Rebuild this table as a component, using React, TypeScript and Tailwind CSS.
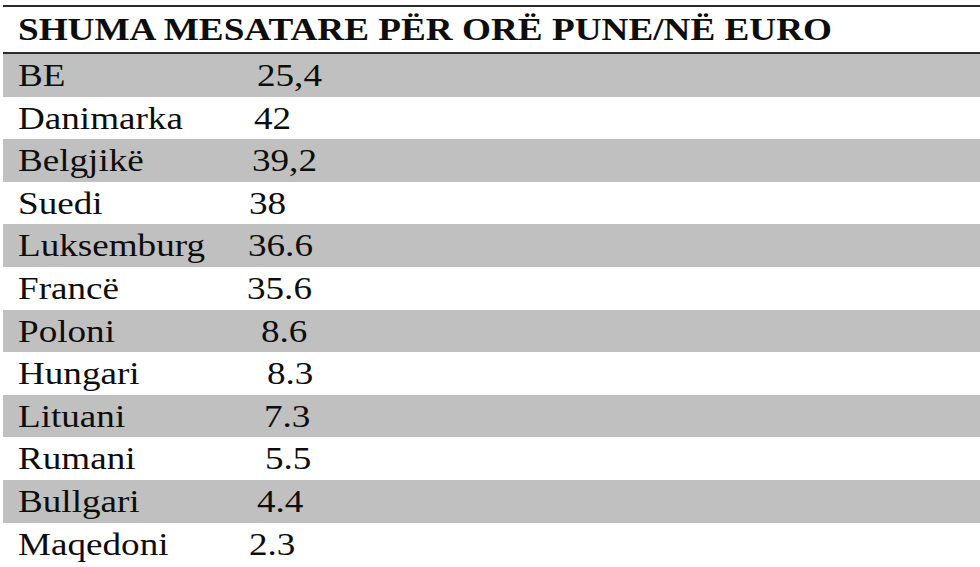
const rows: { name: string; value: string; x: number }[] = [
  { name: "BE", value: "25,4", x: 257 },
  { name: "Danimarka", value: "42", x: 254 },
  { name: "Belgjikë", value: "39,2", x: 252 },
  { name: "Suedi", value: "38", x: 249 },
  { name: "Luksemburg", value: "36.6", x: 248 },
  { name: "Francë", value: "35.6", x: 247 },
  { name: "Poloni", value: "8.6", x: 261 },
  { name: "Hungari", value: "8.3", x: 267 },
  { name: "Lituani", value: "7.3", x: 264 },
  { name: "Rumani", value: "5.5", x: 265 },
  { name: "Bullgari", value: "4.4", x: 257 },
  { name: "Maqedoni", value: "2.3", x: 249 },
];

export default function App() {
  return (
    <div
      className="w-[980px] h-[567px] overflow-hidden bg-white pt-[5px] pl-[3px] text-[#0d0d0d]"
      style={{ fontFamily: '"Liberation Serif", "Times New Roman", serif' }}
    >
      <div className="h-[49px] border-y-2 border-[#2a2a2a] pl-[15px]">
        <span className="inline-block origin-left scale-x-[1.2] whitespace-nowrap text-[31px] font-bold leading-[45px]">
          SHUMA MESATARE PËR ORË PUNE/NË EURO
        </span>
      </div>
      {rows.map((r, i) => (
        <div
          key={r.name}
          className={
            "flex h-[42.6px] pl-[15px] text-[32px] leading-[42.6px] " +
            (i % 2 == 0 ? "bg-[#c0c0c0]" : "bg-white")
          }
        >
          <span className="inline-block w-[229px] shrink-0 origin-left scale-x-[1.16] whitespace-nowrap">
            {r.name}
          </span>
          <span
            className="inline-block origin-left scale-x-[1.16] whitespace-nowrap"
            style={{ marginLeft: r.x - 247 }}
          >
            {r.value}
          </span>
        </div>
      ))}
    </div>
  );
}
